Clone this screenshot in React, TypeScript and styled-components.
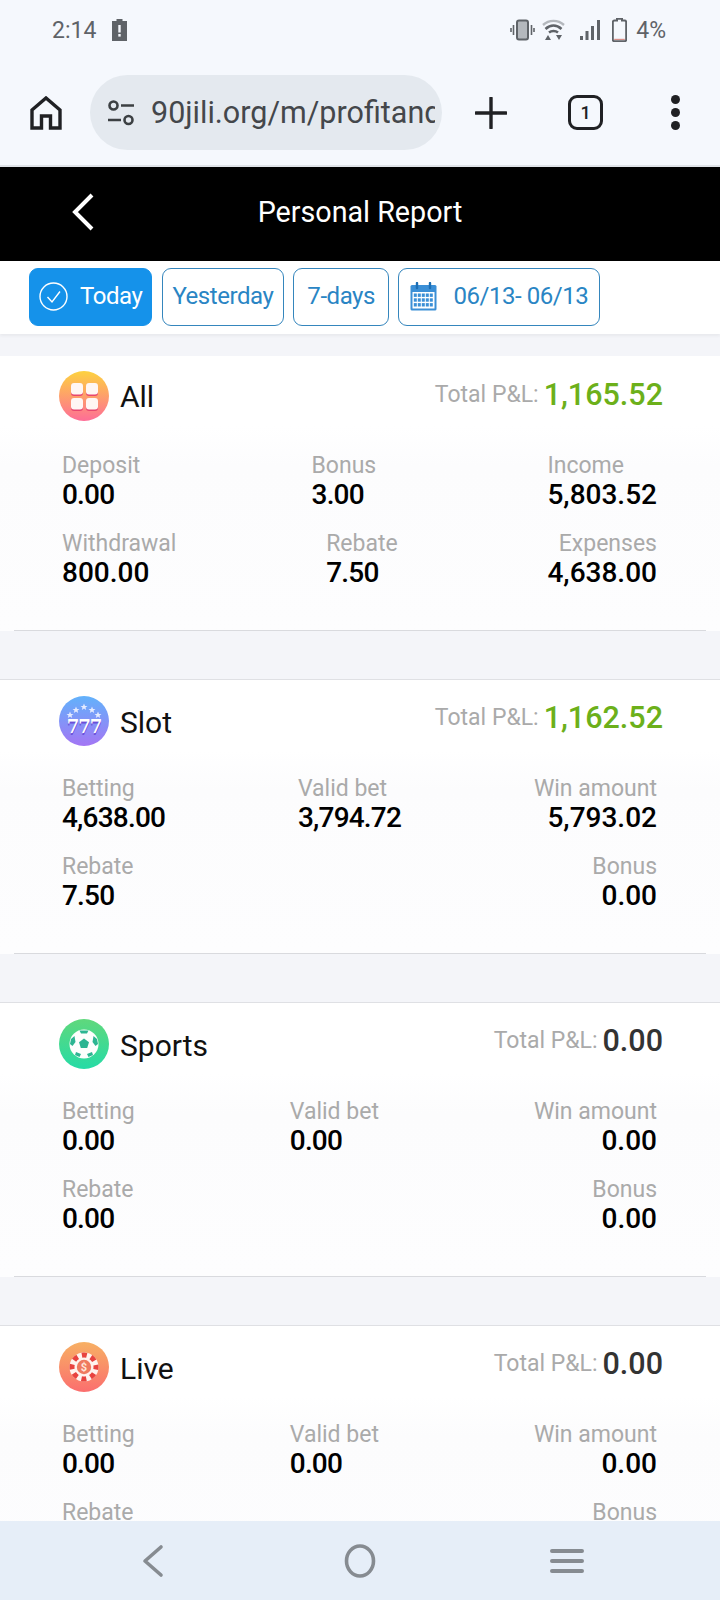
import React from 'react';
import styled, { createGlobalStyle } from 'styled-components';

const GlobalStyle = createGlobalStyle`
  html, body { margin: 0; padding: 0; background: #f4f5f9; }
  * { box-sizing: border-box; }
`;

type Stat = { label: string; value: string; wide?: boolean; left?: boolean };
type Report = {
  name: string;
  icon: React.ReactNode;
  total: string;
  profit?: boolean;
  rows: Stat[][];
};

const AllIcon = () => (
  <svg width="50" height="50" viewBox="0 0 50 50">
    <defs>
      <linearGradient id="allBg" x1="0" y1="0" x2="0" y2="1">
        <stop offset="0" stopColor="#fdd23f" />
        <stop offset="1" stopColor="#fe6d97" />
      </linearGradient>
    </defs>
    <circle cx="25" cy="25" r="25" fill="url(#allBg)" />
    {[[12, 12], [27, 12], [12, 27], [27, 27]].map(([x, y]) => (
      <g key={`${x}-${y}`}>
        <rect x={x} y={y + 1} width="12" height="12" rx="3" fill="#e8456f" />
        <rect x={x} y={y} width="12" height="11.5" rx="3" fill="#fff6f4" />
      </g>
    ))}
  </svg>
);

const SlotIcon = () => (
  <svg width="50" height="50" viewBox="0 0 50 50">
    <defs>
      <linearGradient id="slotBg" x1="0" y1="0" x2="0" y2="1">
        <stop offset="0" stopColor="#62b2fb" />
        <stop offset="1" stopColor="#a376f4" />
      </linearGradient>
    </defs>
    <circle cx="25" cy="25" r="25" fill="url(#slotBg)" />
    {[[11, 19], [17, 14], [25, 11], [33, 14], [39, 19]].map(([x, y]) => (
      <polygon
        key={x}
        points={`${x},${y - 3.5} ${x + 1},${y - 1} ${x + 3.5},${y - 1} ${x + 1.5},${y + 0.6} ${x + 2.2},${y + 3} ${x},${y + 1.6} ${x - 2.2},${y + 3} ${x - 1.5},${y + 0.6} ${x - 3.5},${y - 1} ${x - 1},${y - 1}`}
        fill="#e4ebff"
      />
    ))}
    <text x="25" y="39" textAnchor="middle" fontFamily="'DejaVu Serif', serif" fontWeight="700" fontSize="18" letterSpacing="-1" fill="#6a4fd8">777</text>
    <text x="25" y="37" textAnchor="middle" fontFamily="'DejaVu Serif', serif" fontWeight="700" fontSize="18" letterSpacing="-1" fill="#ffffff">777</text>
  </svg>
);

const SportsIcon = () => (
  <svg width="50" height="50" viewBox="0 0 50 50">
    <defs>
      <linearGradient id="sportsBg" x1="0" y1="0" x2="0" y2="1">
        <stop offset="0" stopColor="#5fd87c" />
        <stop offset="1" stopColor="#26dba6" />
      </linearGradient>
    </defs>
    <circle cx="25" cy="25" r="25" fill="url(#sportsBg)" />
    <circle cx="25" cy="25" r="14.5" fill="#fdfefd" />
    <polygon points="25,19.5 30,23.2 28.2,29 21.8,29 20,23.2" fill="#2db592" />
    <path d="M20.5 11.5 H29.5 L28 14.5 H22 Z M12 20 L15.5 17 L16.5 23 L13.5 27 L11 25 Z M38 20 L34.5 17 L33.5 23 L36.5 27 L39 25 Z M17 33 L22 35 L20.5 38 L16 36 Z M33 33 L28 35 L29.5 38 L34 36 Z" fill="#2db592" />
  </svg>
);

const LiveIcon = () => (
  <svg width="50" height="50" viewBox="0 0 50 50">
    <defs>
      <linearGradient id="liveBg" x1="0" y1="0" x2="0" y2="1">
        <stop offset="0" stopColor="#f7b064" />
        <stop offset="1" stopColor="#fb6e6e" />
      </linearGradient>
    </defs>
    <circle cx="25" cy="25" r="25" fill="url(#liveBg)" />
    <circle cx="25" cy="25" r="14.5" fill="#fff3ee" />
    <circle cx="25" cy="25" r="12" fill="none" stroke="#e8433f" strokeWidth="5" strokeDasharray="5 4.42" strokeDashoffset="2.5" />
    <circle cx="25" cy="25" r="9" fill="#fff3ee" />
    <circle cx="25" cy="25" r="7.2" fill="#ef7a5f" />
    <text x="25" y="29" textAnchor="middle" fontFamily="Roboto, sans-serif" fontWeight="700" fontSize="11" fill="#ffe6d8">$</text>
  </svg>
);

const reports: Report[] = [
  {
    name: 'All',
    icon: <AllIcon />,
    total: '1,165.52',
    profit: true,
    rows: [
      [
        { label: 'Deposit', value: '0.00' },
        { label: 'Bonus', value: '3.00' },
        { label: 'Income', value: '5,803.52', left: true },
      ],
      [
        { label: 'Withdrawal', value: '800.00', wide: true },
        { label: 'Rebate', value: '7.50' },
        { label: 'Expenses', value: '4,638.00' },
      ],
    ],
  },
  {
    name: 'Slot',
    icon: <SlotIcon />,
    total: '1,162.52',
    profit: true,
    rows: [
      [
        { label: 'Betting', value: '4,638.00' },
        { label: 'Valid bet', value: '3,794.72' },
        { label: 'Win amount', value: '5,793.02' },
      ],
      [
        { label: 'Rebate', value: '7.50' },
        { label: 'Bonus', value: '0.00' },
      ],
    ],
  },
  {
    name: 'Sports',
    icon: <SportsIcon />,
    total: '0.00',
    rows: [
      [
        { label: 'Betting', value: '0.00' },
        { label: 'Valid bet', value: '0.00' },
        { label: 'Win amount', value: '0.00' },
      ],
      [
        { label: 'Rebate', value: '0.00' },
        { label: 'Bonus', value: '0.00' },
      ],
    ],
  },
  {
    name: 'Live',
    icon: <LiveIcon />,
    total: '0.00',
    rows: [
      [
        { label: 'Betting', value: '0.00' },
        { label: 'Valid bet', value: '0.00' },
        { label: 'Win amount', value: '0.00' },
      ],
      [
        { label: 'Rebate', value: '0.00' },
        { label: 'Bonus', value: '0.00' },
      ],
    ],
  },
];

const StatusBar = () => (
  <StatusRow>
    <StatusGroup>
      <span>2:14</span>
      <svg width="15" height="22" viewBox="0 0 15 22">
        <path d="M4.5 0 H10.5 V2 H15 V22 H0 V2 H4.5 Z" fill="#5f6368" />
        <rect x="6.3" y="6" width="2.4" height="7.5" fill="#f5f8fd" />
        <rect x="6.3" y="15" width="2.4" height="2.6" fill="#f5f8fd" />
      </svg>
    </StatusGroup>
    <StatusRight>
      <svg width="25" height="22" viewBox="0 0 25 22">
        <rect x="7" y="1.5" width="11" height="19" rx="2" fill="#b4b8bd" stroke="#5f6368" strokeWidth="2" />
        <path d="M3.5 6 V16 M1 9 V13 M21.5 6 V16 M24 9 V13" stroke="#5f6368" strokeWidth="1.6" />
      </svg>
      <svg width="23" height="22" viewBox="0 0 23 22">
        <path d="M1 6 C7 0.5 16 0.5 22 6" fill="none" stroke="#b4b8bd" strokeWidth="2.4" />
        <path d="M3.5 10 C8.5 5.5 14.5 5.5 19.5 10" fill="none" stroke="#5f6368" strokeWidth="2.6" />
        <path d="M7 13.5 C9.5 11.5 13.5 11.5 16 13.5" fill="none" stroke="#5f6368" strokeWidth="2.6" />
        <path d="M3 21 L6 16 L9 21 Z M14 16 H20 L17 21 Z" fill="#5f6368" />
      </svg>
      <SignalIcon width="20" height="20" viewBox="0 0 20 20">
        <path d="M0 16 H3 V20 H0 Z M5.5 11 H8.5 V20 H5.5 Z M11 6 H14 V20 H11 Z M17 0 H20 V20 H17 Z" fill="#5f6368" />
      </SignalIcon>
      <BatteryIcon width="15" height="24" viewBox="0 0 15 24">
        <path d="M5 0.8 H10 V2.6 H12.6 A1.6 1.6 0 0 1 14.2 4.2 V21.6 A1.6 1.6 0 0 1 12.6 23.2 H2.4 A1.6 1.6 0 0 1 0.8 21.6 V4.2 A1.6 1.6 0 0 1 2.4 2.6 H5 Z" fill="none" stroke="#5f6368" strokeWidth="2" />
        <rect x="2.2" y="20.8" width="10.6" height="1.2" fill="#d8908a" />
      </BatteryIcon>
      <Percent>4%</Percent>
    </StatusRight>
  </StatusRow>
);

const BrowserBar = () => (
  <Toolbar>
    <HomeButton width="32" height="34" viewBox="0 0 32 34">
      <path d="M2 32 V14 L16 2 L30 14 V32 H20.5 V20 H11.5 V32 Z" fill="none" stroke="#202124" strokeWidth="3.4" strokeLinejoin="miter" />
    </HomeButton>
    <AddressPill>
      <svg width="28" height="28" viewBox="0 0 28 28">
        <circle cx="6.5" cy="6.5" r="4" fill="none" stroke="#3c4043" strokeWidth="2.6" />
        <path d="M14 6.5 H27 M1 21 H14" stroke="#3c4043" strokeWidth="2.6" />
        <circle cx="21.5" cy="21" r="4" fill="none" stroke="#3c4043" strokeWidth="2.6" />
      </svg>
      <AddressText>90jili.org/m/profitandloss</AddressText>
    </AddressPill>
    <PlusButton width="32" height="32" viewBox="0 0 32 32">
      <path d="M16 1 V31 M1 16 H31" stroke="#202124" strokeWidth="3.4" strokeLinecap="round" />
    </PlusButton>
    <TabCount>1</TabCount>
    <Dots>
      <i />
      <i />
      <i />
    </Dots>
  </Toolbar>
);

const Tabs = () => (
  <TabRow>
    <Tab $active $pad={9} $gap={12}>
      <svg width="29" height="29" viewBox="0 0 29 29">
        <circle cx="14.5" cy="14.5" r="13.5" fill="none" stroke="#fff" strokeWidth="1.4" />
        <path d="M8.5 15 L13 20 L21 9.5" fill="none" stroke="#fff" strokeWidth="1.4" />
      </svg>
      Today
    </Tab>
    <Tab $pad={9.5} $gap={0}>Yesterday</Tab>
    <Tab $pad={13} $gap={0}>7-days</Tab>
    <Tab $pad={11} $gap={16}>
      <svg width="27" height="29" viewBox="0 0 27 29">
        <rect x="0.5" y="3" width="26" height="25.5" rx="1.5" fill="#3b8fd6" />
        <rect x="2.5" y="10" width="22" height="16.5" fill="#fff" />
        <path d="M7 1 V6 M20 1 V6" stroke="#1c6fb5" strokeWidth="2.4" strokeLinecap="round" />
        {[0, 1, 2].map(r =>
          [0, 1, 2, 3, 4].map(c => (
            <rect key={`${r}${c}`} x={3.8 + c * 4} y={11.5 + r * 4.8} width="3" height="3.4" fill="#3b8fd6" />
          )),
        )}
      </svg>
      06/13- 06/13
    </Tab>
  </TabRow>
);

const ReportCard = ({ report }: { report: Report }) => (
  <Card>
    <CardInner>
      <CardHeader>
        <Title>
          {report.icon}
          <TitleName>{report.name}</TitleName>
        </Title>
        <Total>
          <TotalLabel>Total P&amp;L:</TotalLabel>
          <TotalValue $profit={report.profit}>{report.total}</TotalValue>
        </Total>
      </CardHeader>
      <Stats>
        {report.rows.map((row, i) => (
          <StatRow key={i}>
            {row.map((stat, j) => {
              const last = j === row.length - 1;
              return (
                <StatCell key={stat.label} $right={last && !stat.left}>
                  <StatLabel>{stat.label}</StatLabel>
                  <StatValue $compact={!last && !stat.wide}>{stat.value}</StatValue>
                </StatCell>
              );
            })}
          </StatRow>
        ))}
      </Stats>
    </CardInner>
  </Card>
);

export default function App() {
  return (
    <Screen>
      <GlobalStyle />
      <StatusBar />
      <BrowserBar />
      <Header>
        <BackButton width="24" height="38" viewBox="0 0 24 38">
          <path d="M21 2 L4 19 L21 36" fill="none" stroke="#fff" strokeWidth="4" />
        </BackButton>
        <HeaderTitle>Personal Report</HeaderTitle>
      </Header>
      <Tabs />
      <Content>
        {reports.map(report => (
          <ReportCard key={report.name} report={report} />
        ))}
      </Content>
      <NavBar>
        <svg width="24" height="34" viewBox="0 0 24 34">
          <path d="M20 3 L4 17 L20 31" fill="none" stroke="#868b91" strokeWidth="3.6" strokeLinecap="round" strokeLinejoin="round" />
        </svg>
        <NavHome width="32" height="34" viewBox="0 0 32 34">
          <ellipse cx="16" cy="17" rx="13.5" ry="15" fill="none" stroke="#868b91" strokeWidth="3.6" />
        </NavHome>
        <svg width="34" height="28" viewBox="0 0 34 28">
          <path d="M2 4 H32 M2 14 H32 M2 24 H32" stroke="#868b91" strokeWidth="4" strokeLinecap="round" />
        </svg>
      </NavBar>
    </Screen>
  );
}

const Screen = styled.div`
  width: 720px;
  height: 1600px;
  display: flex;
  flex-direction: column;
  overflow: hidden;
  background: #f4f5f9;
  font-family: Roboto, 'Liberation Sans', sans-serif;
`;

const StatusRow = styled.div`
  height: 60px;
  padding: 0 54px 0 52px;
  display: flex;
  align-items: center;
  justify-content: space-between;
  background: #f5f8fd;
  color: #5f6368;
  font-size: 23px;
`;

const StatusGroup = styled.div`
  display: flex;
  align-items: center;
  gap: 16px;
`;

const StatusRight = styled.div`
  display: flex;
  align-items: center;
  gap: 7px;
`;

const SignalIcon = styled.svg`
  margin-left: 8px;
`;

const BatteryIcon = styled.svg`
  margin-left: 5px;
`;

const Percent = styled.span`
  margin-left: 2px;
`;

const Toolbar = styled.div`
  height: 107px;
  display: flex;
  align-items: center;
  background: #f5f8fd;
  border-bottom: 2px solid #dfe3e8;
`;

const HomeButton = styled.svg`
  margin-left: 30px;
  flex: none;
`;

const AddressPill = styled.div`
  margin-left: 28px;
  width: 352px;
  height: 75px;
  padding: 0 7px 0 17px;
  flex: none;
  display: flex;
  align-items: center;
  gap: 16px;
  border-radius: 38px;
  background: #e4e9ef;
`;

const AddressText = styled.div`
  flex: 1;
  overflow: hidden;
  white-space: nowrap;
  font-size: 30.5px;
  color: #44474b;
`;

const PlusButton = styled.svg`
  margin-left: 33px;
  flex: none;
`;

const TabCount = styled.div`
  margin-left: 61px;
  width: 35px;
  height: 35px;
  flex: none;
  display: flex;
  align-items: center;
  justify-content: center;
  border: 3.4px solid #202124;
  border-radius: 9px;
  font-size: 18px;
  font-weight: 500;
  color: #202124;
`;

const Dots = styled.div`
  margin-left: 68px;
  display: flex;
  flex-direction: column;
  gap: 4px;

  i {
    display: block;
    width: 9px;
    height: 9px;
    border-radius: 50%;
    background: #202124;
  }
`;

const Header = styled.div`
  position: relative;
  height: 94px;
  padding: 0 0 5px 71px;
  display: flex;
  align-items: center;
  background: #000;
`;

const BackButton = styled.svg`
  flex: none;
`;

const HeaderTitle = styled.div`
  position: absolute;
  left: 0;
  right: 0;
  text-align: center;
  font-size: 28.7px;
  color: #fff;
`;

const TabRow = styled.div`
  height: 73px;
  padding: 7px 0 0 29px;
  display: flex;
  gap: 9.5px;
  background: #fff;
  box-shadow: 0 2px 3px rgba(0, 0, 0, 0.05);
`;

const Tab = styled.div<{ $active?: boolean; $pad: number; $gap: number }>`
  height: 58px;
  padding: 0 ${p => p.$pad}px 2px;
  display: flex;
  align-items: center;
  gap: ${p => p.$gap}px;
  border: 1px solid ${p => (p.$active ? '#1592ea' : '#3586bd')};
  border-radius: 9px;
  background: ${p => (p.$active ? '#1592ea' : '#fff')};
  color: ${p => (p.$active ? '#fff' : '#2a85c4')};
  font-size: 24px;
  letter-spacing: -0.45px;
  white-space: nowrap;
`;

const Content = styled.div`
  flex: 1;
  min-height: 0;
  overflow: hidden;
  padding-top: 22px;
  display: flex;
  flex-direction: column;
  gap: 48px;
`;

const Card = styled.div`
  flex: none;
  height: 275px;
  padding: 0 14px;
  background: linear-gradient(#fff 0, #fff 70px, #fcfcfd 110px, #fdfdfe 100%);

  & + & {
    border-top: 1px solid #dfe0e4;
  }
`;

const CardInner = styled.div`
  height: 100%;
  padding-left: 45px;
  border-bottom: 1px solid #d9dade;
`;

const CardHeader = styled.div`
  height: 66px;
  padding: 0 43px 0 0;
  display: flex;
  justify-content: space-between;
  align-items: flex-start;
`;

const Title = styled.div`
  padding-top: 15px;
  display: flex;
  align-items: center;
  gap: 11px;
  font-size: 30px;
  color: #111;

  ${Card} + ${Card} & {
    padding-top: 16px;
  }
`;

const TitleName = styled.span`
  padding-top: 1px;

  ${Card} + ${Card} & {
    padding-top: 2px;
  }
`;

const Total = styled.div`
  padding-top: 19px;
  height: 58px;
  display: flex;
  align-items: center;
  gap: 5px;
  align-self: flex-start;

  ${Card} + ${Card} & {
    padding-top: 16px;
  }
`;

const TotalLabel = styled.span`
  font-size: 23px;
  color: #aaa;
`;

const TotalValue = styled.span<{ $profit?: boolean }>`
  font-size: 30.5px;
  font-weight: 500;
  color: ${p => (p.$profit ? '#6cb01a' : '#333')};
`;

const Stats = styled.div`
  margin-top: 30px;
  padding: 0 49px 0 3px;
  display: flex;
  flex-direction: column;
  gap: 20px;

  ${Card} + ${Card} & {
    margin-top: 29px;
  }
`;

const StatRow = styled.div`
  display: flex;
  justify-content: space-between;
`;

const StatCell = styled.div<{ $right: boolean }>`
  display: flex;
  flex-direction: column;
  text-align: ${p => (p.$right ? 'right' : 'left')};
`;

const StatLabel = styled.div`
  height: 28px;
  line-height: 28px;
  font-size: 23px;
  color: #aaa;
`;

const StatValue = styled.div<{ $compact: boolean }>`
  height: 30px;
  line-height: 30px;
  font-size: 28px;
  letter-spacing: ${p => (p.$compact ? '-0.8px' : '0')};
  font-weight: 500;
  color: #000;
`;

const NavBar = styled.div`
  flex: none;
  height: 79px;
  padding: 0 136px 0 141px;
  display: flex;
  align-items: center;
  justify-content: space-between;
  background: #e6eef8;
  position: relative;
`;

const NavHome = styled.svg`
  margin-left: 5px;
`;
